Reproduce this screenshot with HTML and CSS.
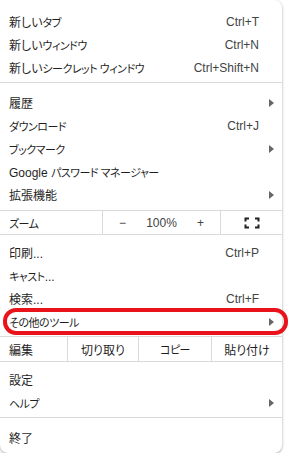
FILE: index.html
```html
<!DOCTYPE html>
<html>
<head>
    <meta charset="UTF-8">
    <title>メニュー</title>
    <link rel="stylesheet" href="styles.css">
</head>
<body>
<div class="menu">
    <div class="group first">
        <div class="item"><span class="label">新しい<span class="kt">タブ</span></span><span class="key">Ctrl+T</span></div>
        <div class="item"><span class="label">新しい<span class="kt">ウィンドウ</span></span><span class="key">Ctrl+N</span></div>
        <div class="item"><span class="label">新しい<span class="kt">シークレット ウィンドウ</span></span><span class="key">Ctrl+Shift+N</span></div>
    </div>
    <div class="group wide">
        <div class="item"><span class="label">履歴</span><span class="arrow"></span></div>
        <div class="item"><span class="label"><span class="kt">ダウンロード</span></span><span class="key">Ctrl+J</span></div>
        <div class="item"><span class="label"><span class="kt">ブックマーク</span></span><span class="arrow"></span></div>
        <div class="item"><span class="label">Google <span class="kt">パスワード マネージャー</span></span></div>
        <div class="item"><span class="label">拡張機能</span><span class="arrow"></span></div>
    </div>
    <div class="group zoomRow">
        <div class="cell label"><span class="kt">ズーム</span></div>
        <div class="cell zoomCtl">
            <span>−</span>
            <span>100%</span>
            <span>+</span>
        </div>
        <div class="cell center">
            <svg width="16" height="12" viewBox="0 0 16 12">
                <path d="M1.5 4.5V1.5H5 M11 1.5H14.5V4.5 M14.5 7.5V10.5H11 M5 10.5H1.5V7.5" fill="none" stroke="#202124" stroke-width="2"/>
            </svg>
        </div>
    </div>
    <div class="group narrow">
        <div class="item"><span class="label">印刷...</span><span class="key">Ctrl+P</span></div>
        <div class="item"><span class="label"><span class="kt">キャスト</span>...</span></div>
        <div class="item"><span class="label">検索...</span><span class="key">Ctrl+F</span></div>
        <div class="item marked"><span class="label"><span class="kt">その他のツール</span></span><span class="arrow"></span><span class="mark"></span></div>
    </div>
    <div class="group editRow">
        <div class="cell label">編集</div>
        <div class="cell center">切り取り</div>
        <div class="cell center"><span class="kt">コピー</span></div>
        <div class="cell center">貼り付け</div>
    </div>
    <div class="group narrow">
        <div class="item"><span class="label">設定</span></div>
        <div class="item"><span class="label"><span class="kt">ヘルプ</span></span><span class="arrow"></span></div>
    </div>
    <div class="group last">
        <div class="item"><span class="label">終了</span></div>
    </div>
</div>
</body>
</html>
```
FILE: styles.css
```css
* {
    margin: 0;
    padding: 0;
    box-sizing: border-box;
}

body {
    background: #fff;
    font-family: "Liberation Sans", "Noto Sans CJK JP", sans-serif;
    font-size: 12px;
    color: #1f1f1f;
    font-feature-settings: "palt";
}

.menu {
    width: 282px;
    height: 453px;
    background: #fff;
    border-radius: 0 8px 8px 8px;
    box-shadow: 0 1px 3px rgba(0, 0, 0, 0.35);
}

/* 区切り線はグループの下線 */
.group {
    border-bottom: 1px solid #dadada;
}

.first {
    padding: 10px 0 3px;
}

.wide {
    padding: 8px 0 4px;
}

.narrow {
    padding: 6px 0 3px;
}

.last {
    padding: 8px 0 4px;
    border-bottom: none;
}

.item {
    display: flex;
    align-items: center;
    height: 23px;
    padding: 0 8px 0 9px;
    position: relative;
}

.item .label {
    flex: 1;
}

/* カタカナは少し詰める */
.kt {
    font-size: 11px;
    letter-spacing: -0.5px;
}

.key {
    margin-right: 15px;
    color: #444;
}

.arrow {
    width: 0;
    height: 0;
    border-left: 5px solid #666;
    border-top: 4px solid transparent;
    border-bottom: 4px solid transparent;
}

/* 赤い囲み */
.mark {
    position: absolute;
    top: -2px;
    left: 3px;
    width: 285px;
    height: 27px;
    border: 4px solid #e8131b;
    border-radius: 13px;
}

.zoomRow {
    display: grid;
    grid-template-columns: 102px 118px 1fr;
    height: 24px;
}

.editRow {
    display: grid;
    grid-template-columns: 67px 71px 73px 1fr;
    height: 25px;
}

.cell {
    display: flex;
    align-items: center;
    border-left: 1px solid #dadada;
}

.cell.label {
    padding-left: 9px;
    border-left: none;
}

.center {
    justify-content: center;
}

.zoomCtl {
    display: grid;
    grid-template-columns: 1fr 1fr 1fr;
    color: #444;
}

.zoomCtl span {
    text-align: center;
}
```
